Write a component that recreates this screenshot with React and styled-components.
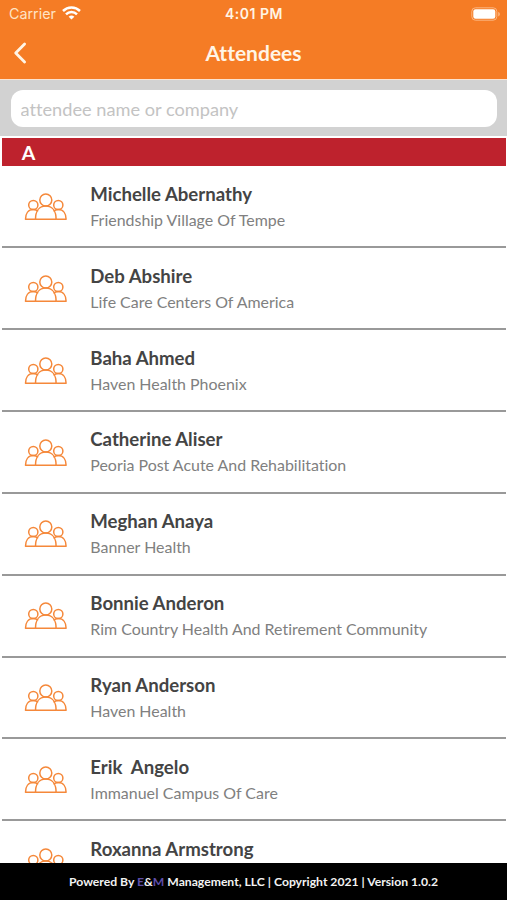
import styled, { createGlobalStyle } from "styled-components";

const GlobalStyle = createGlobalStyle`
    * {
        box-sizing: border-box;
        margin: 0;
        padding: 0;
    }

    body {
        background-color: #fff;
        font-family: Lato, sans-serif;
        font-variant-ligatures: none;
        overflow: hidden;
    }
`

const Screen = styled.div`
    display: flex;
    flex-direction: column;
    width: 507px;
    height: 900px;
    background-color: #fff;
    overflow: hidden;
`

const Header = styled.header`
    flex: none;
    height: 80px;
    background-color: #f57c25;
    border-bottom: 1px solid #fbe3d0;
    color: #fff5e6;
`

const StatusBar = styled.div`
    display: grid;
    grid-template-columns: 1fr auto 1fr;
    align-items: center;
    height: 27px;
    padding: 0 6px 0 7px;
    font-family: Inter, sans-serif;
`

const Carrier = styled.div`
    display: flex;
    align-items: center;
    gap: 6px;
    padding-left: 2px;
    font-size: 14.3px;
    color: #ffe3c4;

    svg {
        position: relative;
        top: -1px;
    }
`

const Clock = styled.time`
    font-size: 14px;
    font-weight: 600;
    letter-spacing: 0.5px;
`

const Battery = styled.svg`
    justify-self: end;
`

const NavBar = styled.div`
    display: grid;
    grid-template-columns: 40px 1fr 40px;
    align-items: center;
    height: 52px;
`

const BackButton = styled.button`
    display: flex;
    padding-left: 13px;
    border: 0;
    background: none;
    color: inherit;
`

const Title = styled.h1`
    font-size: 21px;
    font-weight: 700;
    line-height: 26px;
    text-align: center;
`

const SearchBar = styled.div`
    flex: none;
    height: 56px;
    padding: 10px 10px 9px 10.6px;
    background-color: #d2d2d2;
`

const SearchInput = styled.input`
    display: block;
    width: 100%;
    height: 37px;
    padding: 0 10px;
    border: 0;
    border-radius: 12px;
    background-color: #fff;
    font-family: inherit;
    font-size: 18.2px;
    font-variant-ligatures: none;

    &::placeholder {
        color: #c3c3c3;
        opacity: 1;
    }
`

const Letter = styled.h2`
    flex: none;
    height: 28.4px;
    margin: 1.8px 1.5px 0 2.3px;
    padding-left: 19.5px;
    background-color: #be222d;
    color: #fff;
    font-size: 19.5px;
    font-weight: 700;
    line-height: 29px;
`

const List = styled.ul`
    flex: 1;
    min-height: 0;
    margin: 0.4px 1.5px 0 2.3px;
    list-style: none;
    overflow: hidden;
`

const Row = styled.li`
    display: flex;
    align-items: center;
    height: 81.83px;
    padding: 1.2px 0 0 22px;
    border-bottom: 2px solid #999;
`

const PeopleSvg = styled.svg`
    flex: none;
    margin-right: 23px;
`

const Name = styled.p`
    font-size: 18.6px;
    font-weight: 700;
    line-height: 26px;
    color: #444;
    white-space: pre;
`

const Company = styled.p`
    font-size: 15.95px;
    line-height: 26.4px;
    color: #808080;
`

const Footer = styled.footer`
    flex: none;
    height: 37px;
    background-color: #000;
    color: #f2f2f2;
    font-size: 12.18px;
    font-weight: 700;
    line-height: 37px;
    text-align: center;
`

const Brand = styled.span`
    color: #5d4da8;
`

const attendees = [
    { name: 'Michelle Abernathy', company: 'Friendship Village Of Tempe' },
    { name: 'Deb Abshire', company: 'Life Care Centers Of America' },
    { name: 'Baha Ahmed', company: 'Haven Health Phoenix' },
    { name: 'Catherine Aliser', company: 'Peoria Post Acute And Rehabilitation' },
    { name: 'Meghan Anaya', company: 'Banner Health' },
    { name: 'Bonnie Anderon', company: 'Rim Country Health And Retirement Community' },
    { name: 'Ryan Anderson', company: 'Haven Health' },
    { name: 'Erik  Angelo', company: 'Immanuel Campus Of Care' },
    { name: 'Roxanna Armstrong', company: '' },
];

const WifiIcon = () => (
    <svg width="19" height="14" viewBox="0 0 19 14" fill="none" stroke="#fff" strokeWidth="2.5">
        <path d="M1 5a12.2 12.2 0 0 1 17 0" />
        <path d="M4 8.300a7.800 7.800 0 0 1 11 0" />
        <path d="M9.500 13.600 6.600 10.800a4.200 4.200 0 0 1 5.800 0Z" fill="#fff" stroke="none" />
    </svg>
)

const BatteryIcon = () => (
    <Battery width="30" height="14" viewBox="0 0 30 14">
        <rect x="0.8" y="0.8" width="25" height="12.4" rx="3.6" fill="none" stroke="#fbb580" strokeWidth="1" />
        <rect x="2.3" y="2.3" width="22" height="9.4" rx="2.2" fill="#fff" />
        <path d="M27.200 5v4.400c1-.4 1.700-1.200 1.700-2.200S28.200 5.400 27.200 5Z" fill="#fbb580" />
    </Battery>
)

const PeopleIcon = () => (
    <PeopleSvg width="43" height="28" viewBox="0 0 43 28" fill="none" stroke="#f5883a" strokeWidth="1.5" strokeLinejoin="round">
        <circle cx="21.800" cy="7" r="6" />
        <circle cx="9.300" cy="12" r="4.600" />
        <circle cx="34.300" cy="12" r="4.600" />
        <path d="M11.500 26.200c0-8 3.700-13.200 10.300-13.200s10.300 5.200 10.300 13.200Z" />
        <path d="M11.500 26.200H1.500c0-5.500 2.600-9.600 7.800-9.600 2 0 3.600.6 4.900 1.700" />
        <path d="M32.100 26.200h10c0-5.500-2.600-9.600-7.800-9.600-2 0-3.600.6-4.900 1.700" />
    </PeopleSvg>
)

const App = () => {
    return (
        <>
            <GlobalStyle />
            <Screen>
                <Header>
                    <StatusBar>
                        <Carrier>Carrier <WifiIcon /></Carrier>
                        <Clock>4:01 PM</Clock>
                        <BatteryIcon />
                    </StatusBar>
                    <NavBar>
                        <BackButton aria-label="Back">
                            <svg width="14" height="22" viewBox="0 0 14 22" fill="none" stroke="currentColor" strokeWidth="2.8" strokeLinecap="round" strokeLinejoin="round">
                                <path d="M11.600 2 2.700 11l8.900 9" />
                            </svg>
                        </BackButton>
                        <Title>Attendees</Title>
                    </NavBar>
                </Header>
                <SearchBar>
                    <SearchInput placeholder="attendee name or company" />
                </SearchBar>
                <Letter>A</Letter>
                <List>
                    {attendees.map(({ name, company }) => (
                        <Row key={name}>
                            <PeopleIcon />
                            <div>
                                <Name>{name}</Name>
                                <Company>{company || '\u00a0'}</Company>
                            </div>
                        </Row>
                    ))}
                </List>
                <Footer>
                    Powered By <Brand>E</Brand>&amp;<Brand>M</Brand> Management, LLC | Copyright 2021 | Version 1.0.2
                </Footer>
            </Screen>
        </>
    );
}

export default App;
